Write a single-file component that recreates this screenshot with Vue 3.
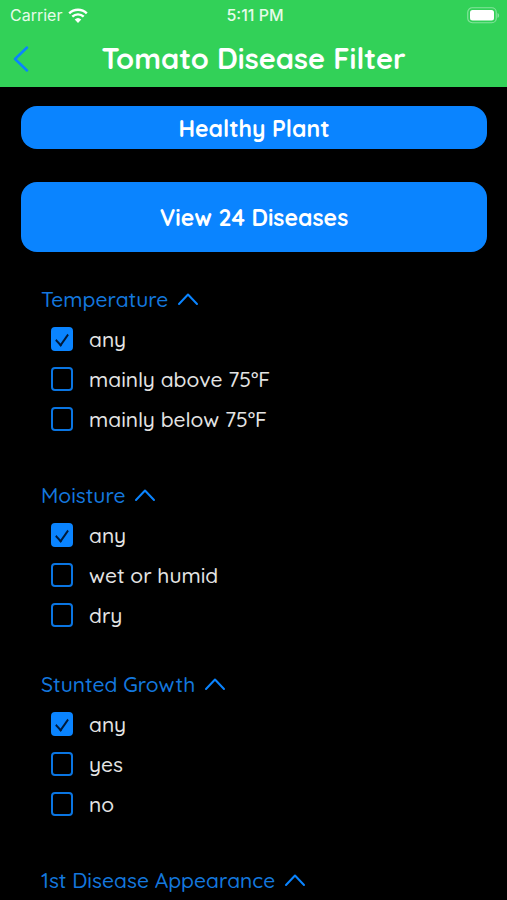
<template>
  <div class="screen">
    <header class="header">
      <div class="status">
        <div class="carrier">
          <span>Carrier</span>
          <svg class="wifi" viewBox="0 0 20 15">
            <path d="M1.2 5.4a12.6 12.6 0 0 1 17.6 0" />
            <path d="M4.3 8.7a8.2 8.2 0 0 1 11.4 0" />
            <path class="dot" d="M10 15l-3.3-3.4a4.8 4.8 0 0 1 6.6 0z" />
          </svg>
        </div>
        <span class="time">5:11 PM</span>
        <svg class="battery" viewBox="0 0 33 17">
          <rect class="shell" x="0.75" y="0.75" width="28.5" height="15" rx="4.5" />
          <rect class="charge" x="3" y="3" width="24" height="10.5" rx="2.5" />
          <path class="tip" d="M30.500 6v5c1.2-.5 1.6-1.4 1.6-2.5s-.4-2-1.6-2.5z" />
        </svg>
      </div>
      <div class="nav">
        <button class="back" type="button" aria-label="Back">
          <svg viewBox="0 0 16 26"><path d="M14 1.5L2 13l12 11.5" /></svg>
        </button>
        <h1>Tomato Disease Filter</h1>
      </div>
    </header>

    <main class="content">
      <button class="btn" type="button">Healthy Plant</button>
      <button class="btn large" type="button">View 24 Diseases</button>

      <section v-for="group in groups" :key="group.name" class="group" :class="{ compact: group.compact }">
        <button class="group-title" type="button" @click="group.open = !group.open">
          <span>{{ group.name }}</span>
          <svg :class="{ closed: !group.open }" viewBox="0 0 22 14"><path d="M2 12l9-9.5 9 9.5" /></svg>
        </button>
        <template v-if="group.open">
          <label v-for="option in group.options" :key="option" class="option">
            <input type="checkbox" :value="option" v-model="group.selected" />
            <span>{{ option }}</span>
          </label>
        </template>
      </section>
    </main>
  </div>
</template>

<script setup>
import { ref } from "vue";

const groups = ref([
  {
    name: "Temperature",
    options: ["any", "mainly above 75°F", "mainly below 75°F"],
    selected: ["any"],
    open: true,
  },
  {
    name: "Moisture",
    options: ["any", "wet or humid", "dry"],
    selected: ["any"],
    open: true,
    compact: true,
  },
  {
    name: "Stunted Growth",
    options: ["any", "yes", "no"],
    selected: ["any"],
    open: true,
  },
  {
    name: "1st Disease Appearance",
    options: [],
    selected: [],
    open: true,
  },
]);
</script>

<style>
body {
  margin: 0;
  background: #000;
}
</style>

<style scoped>
* {
  box-sizing: border-box;
}

.screen {
  display: flex;
  flex-direction: column;
  height: 100vh;
  background: #000;
  color: #e4e4e4;
  font-family: Quicksand, Lato, sans-serif;
}

button {
  padding: 0;
  border: none;
  background: none;
  font-family: inherit;
  cursor: pointer;
}

svg {
  display: block;
  fill: none;
  stroke-linecap: round;
  stroke-linejoin: round;
}

/* Green bar */
.header {
  flex: none;
  background: #32d158;
  color: #fff;
}

.status {
  display: grid;
  grid-template-columns: 1fr auto 1fr;
  align-items: center;
  height: 30px;
  padding: 0 7px 0 10px;
  font-family: Inter, sans-serif;
  font-size: 16px;
  color: #e6fbe9;
}

.carrier {
  display: flex;
  align-items: center;
  gap: 6px;
}

.time {
  font-weight: 500;
}

.wifi {
  width: 20px;
  height: 15px;
  stroke: #fff;
  stroke-width: 2.4;
  stroke-linecap: butt;
}

.wifi .dot {
  fill: #fff;
  stroke: none;
}

.battery {
  justify-self: end;
  width: 33px;
  height: 17px;
}

.shell {
  stroke: #84e39b;
  stroke-width: 1.2;
}

.charge {
  fill: #fff;
}

.tip {
  fill: #84e39b;
}

.nav {
  display: grid;
  grid-template-columns: 40px 1fr 40px;
  align-items: center;
  height: 57px;
}

.back {
  padding-left: 13px;
}

.back svg {
  width: 16px;
  height: 26px;
  stroke: #0a84ff;
  stroke-width: 2.5;
}

h1 {
  margin: 0;
  text-align: center;
  font-size: 29px;
  line-height: 57px;
  font-weight: 700;
}

/* Filters */
.content {
  flex: 1;
  min-height: 0;
  padding: 19px 20px 0 21px;
  overflow-y: auto;
  scrollbar-width: none;
}

.btn {
  display: block;
  width: 100%;
  height: 43px;
  margin-bottom: 33px;
  padding-top: 1px;
  border-radius: 16px;
  background: #0a84ff;
  color: #fff;
  font-size: 23px;
  font-weight: 700;
}

.btn.large {
  height: 70px;
  margin-bottom: 27px;
}

.group {
  padding-left: 20px;
  margin-bottom: 36px;
}

.group.compact {
  margin-bottom: 29px;
}

.group:last-child {
  margin-bottom: 0;
}

.group-title {
  display: flex;
  align-items: center;
  gap: 9px;
  height: 40px;
  color: #1477dd;
  font-size: 21px;
  font-weight: 500;
}

.group-title svg {
  width: 22px;
  height: 14px;
  stroke: #0a84ff;
  stroke-width: 2;
}

.group-title svg.closed {
  transform: rotate(180deg);
}

.option {
  display: flex;
  align-items: center;
  gap: 16px;
  height: 40px;
  padding-left: 10px;
  font-size: 21px;
  font-weight: 500;
  cursor: pointer;
}

.option input {
  display: grid;
  place-items: center;
  flex: none;
  appearance: none;
  width: 22px;
  height: 24px;
  margin: 0;
  border: 2px solid #0a75e2;
  border-radius: 4px;
}

.option input:checked {
  border-color: #0a84ff;
  background: #0a84ff;
}

/* Tick */
.option input:checked::before {
  content: "";
  width: 6px;
  height: 12px;
  margin-bottom: 2px;
  border: solid #001a3a;
  border-width: 0 2px 2px 0;
  transform: rotate(35deg) skewY(12deg);
}
</style>
